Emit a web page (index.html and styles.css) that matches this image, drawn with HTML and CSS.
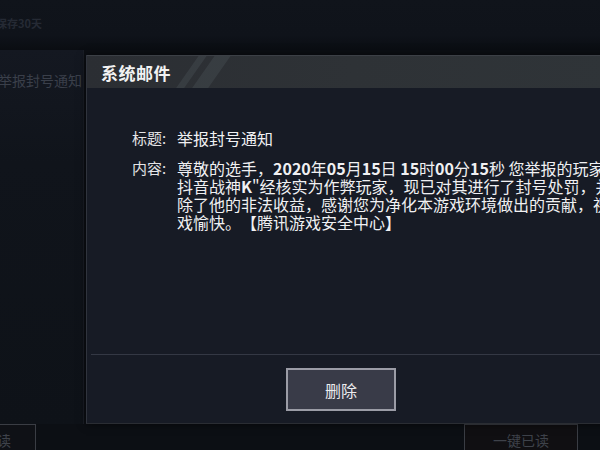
FILE: index.html
```html
<!DOCTYPE html>
<html lang="zh-CN">
<head>
    <meta charset="UTF-8">
    <title>系统邮件</title>
    <link rel="stylesheet" href="styles.css">
</head>
<body>
    <div class="page">
        <div class="top-bar">
            <span class="keep">保存30天</span>
        </div>
        <div class="main">
            <div class="mail-list">
                <div class="mail-item">举报封号通知</div>
            </div>
        </div>
        <div class="bottom-bar">
            <div class="ghost-btn left">一键已读</div>
            <div class="ghost-btn right">一键已读</div>
        </div>
    </div>

    <div class="dialog">
        <div class="dialog-head">
            <span class="dialog-title">系统邮件</span>
            <span class="stripe s1"></span>
            <span class="stripe s2"></span>
        </div>
        <div class="dialog-body">
            <div class="row">
                <span class="label">标题:</span>
                <span class="value">举报封号通知</span>
            </div>
            <div class="row">
                <span class="label">内容:</span>
                <span class="value">尊敬的选手，<b>2020</b>年<b>05</b>月<b>15</b>日 <b>15</b>时<b>00</b>分<b>15</b>秒 您举报的玩家"<br>抖音战神<b>K</b>"经核实为作弊玩家，现已对其进行了封号处罚，并<br>除了他的非法收益，感谢您为净化本游戏环境做出的贡献，祝<br>戏愉快。【腾讯游戏安全中心】</span>
            </div>
        </div>
        <div class="dialog-foot">
            <button class="delete-btn">删除</button>
        </div>
    </div>
</body>
</html>
```

FILE: styles.css
```css
* {
    margin: 0;
    padding: 0;
    box-sizing: border-box;
}
body {
    width: 600px;
    height: 450px;
    overflow: hidden;
    background: #0c0f14;
    font-family: "Noto Sans CJK SC", "Noto Sans", sans-serif;
    color: #e8e8ea;
    position: relative;
}
.page {
    display: flex;
    flex-direction: column;
    height: 450px;
}
.top-bar {
    height: 50px;
    background: linear-gradient(180deg, #10141b 0%, #0f131a 70%, #0a0d12 100%);
    padding: 15px 0 0 0;
}
.keep {
    display: block;
    margin-left: -4px;
    font-size: 11px;
    font-weight: bold;
    color: #252a34;
}
.main {
    flex: 1;
    display: flex;
}
.mail-list {
    width: 84px;
    background: linear-gradient(180deg, #141821 0%, #10141b 30%, #0e1218 100%);
    border-right: 1px solid #1a1e26;
}
.mail-item {
    margin-top: 20px;
    margin-left: -2px;
    font-size: 14px;
    color: #3a3f4a;
    white-space: nowrap;
}
.bottom-bar {
    height: 26px;
    display: flex;
    justify-content: space-between;
    align-items: flex-start;
}
.ghost-btn {
    height: 30px;
    border: 1px solid #3a3d44;
    background: #0f1116;
    color: #3e424a;
    font-size: 14px;
    text-align: center;
    line-height: 30px;
    white-space: nowrap;
    overflow: hidden;
}
.ghost-btn.left {
    width: 38px;
    margin-left: -2px;
    text-indent: -68px;
}
.ghost-btn.right {
    width: 114px;
    margin-right: 22px;
    background: #100f12;
}

.dialog {
    position: absolute;
    left: 86px;
    top: 55px;
    width: 530px;
    height: 369px;
    background: #171b25;
    border-left: 1px solid #30343d;
    border-bottom: 1px solid #2a2d33;
    box-shadow: 0 0 8px rgba(0, 0, 0, 0.6);
    display: flex;
    flex-direction: column;
}
.dialog-head {
    height: 33px;
    position: relative;
    overflow: hidden;
    background: linear-gradient(90deg, #2b2e33 0%, #2e3236 50%, #2f3438 100%);
    border-top: 1px solid #3c4046;
    display: flex;
    align-items: center;
    padding-left: 14px;
}
.dialog-title {
    font-size: 17px;
    font-weight: bold;
    color: #f2f2f2;
    letter-spacing: 0.5px;
    position: relative;
    z-index: 1;
}
.stripe {
    position: absolute;
    top: 0;
    width: 12px;
    height: 33px;
    background: rgba(120, 130, 135, 0.16);
    transform: skewX(-35deg);
}
.s1 { left: 100px; width: 8px; }
.s2 { left: 116px; width: 16px; }
.dialog-body {
    flex: 1;
    padding: 41px 0 0 45px;
    display: flex;
    flex-direction: column;
    gap: 12px;
}
.row {
    display: flex;
    font-size: 16px;
    line-height: 18px;
    white-space: nowrap;
    text-spacing-trim: space-all;
}
.label {
    width: 45px;
    font-size: 15px;
    color: #e4e4e6;
}
.value {
    color: #f0f0f2;
}
.value b {
    font-weight: bold;
}
.dialog-foot {
    height: 69px;
    margin-left: 4px;
    border-top: 1px solid #343844;
    display: flex;
    padding: 13px 0 0 195px;
}
.delete-btn {
    width: 110px;
    height: 43px;
    background: #393b48;
    border: 2px solid #9b9ca6;
    color: #ececee;
    font-family: "Noto Sans CJK SC", sans-serif;
    font-size: 16px;
}
```
